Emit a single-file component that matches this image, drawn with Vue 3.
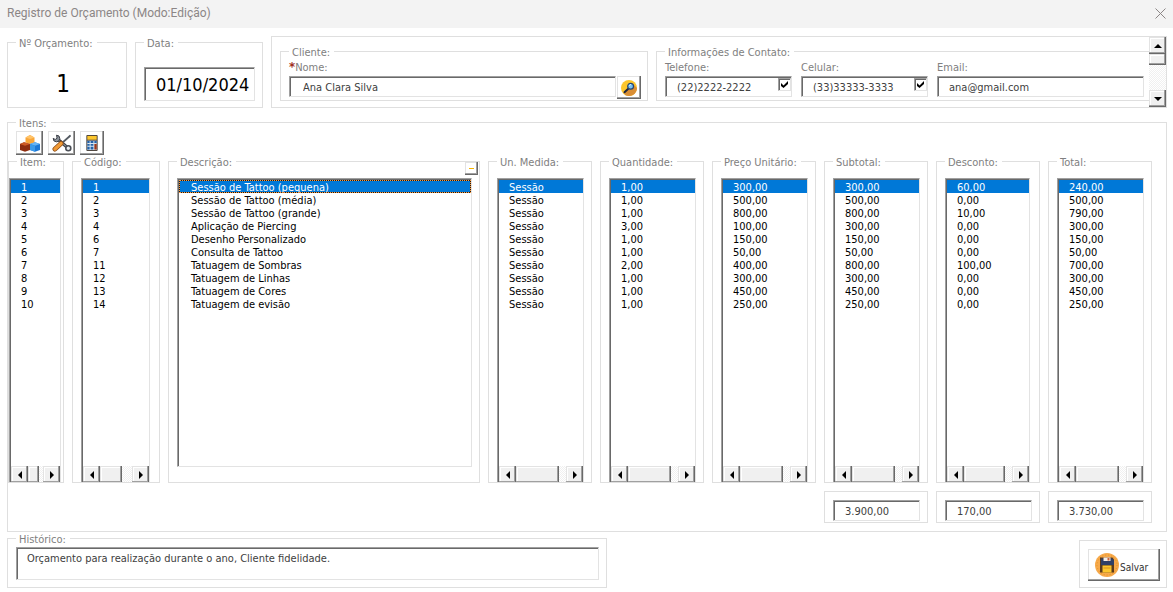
<script setup>
const items = [
  ['1', '1', 'Sessão de Tattoo (pequena)', 'Sessão', '1,00', '300,00', '300,00', '60,00', '240,00'],
  ['2', '2', 'Sessão de Tattoo (média)', 'Sessão', '1,00', '500,00', '500,00', '0,00', '500,00'],
  ['3', '3', 'Sessão de Tattoo (grande)', 'Sessão', '1,00', '800,00', '800,00', '10,00', '790,00'],
  ['4', '4', 'Aplicação de Piercing', 'Sessão', '3,00', '100,00', '300,00', '0,00', '300,00'],
  ['5', '6', 'Desenho Personalizado', 'Sessão', '1,00', '150,00', '150,00', '0,00', '150,00'],
  ['6', '7', 'Consulta de Tattoo', 'Sessão', '1,00', '50,00', '50,00', '0,00', '50,00'],
  ['7', '11', 'Tatuagem de Sombras', 'Sessão', '2,00', '400,00', '800,00', '100,00', '700,00'],
  ['8', '12', 'Tatuagem de Linhas', 'Sessão', '1,00', '300,00', '300,00', '0,00', '300,00'],
  ['9', '13', 'Tatuagem de Cores', 'Sessão', '1,00', '450,00', '450,00', '0,00', '450,00'],
  ['10', '14', 'Tatuagem de evisão', 'Sessão', '1,00', '250,00', '250,00', '0,00', '250,00'],
]

const columns = [
  { label: 'Item:', kind: 'item', thumb: 11 },
  { label: 'Código:', kind: 'code', thumb: 22 },
  { label: 'Descrição:', kind: 'description', thumb: 0 },
  { label: 'Un. Medida:', kind: '', thumb: 43 },
  { label: 'Quantidade:', kind: '', thumb: 43 },
  { label: 'Preço Unitário:', kind: '', thumb: 43 },
  { label: 'Subtotal:', kind: '', thumb: 43 },
  { label: 'Desconto:', kind: 'discount', thumb: 41 },
  { label: 'Total:', kind: '', thumb: 43 },
]

const totals = [
  { label: 'Subtotal', value: '3.900,00' },
  { label: 'Desconto', value: '170,00' },
  { label: 'Total', value: '3.730,00' },
]
</script>

<template>
  <main class="window">
    <header class="titlebar">
      <span>Registro de Orçamento (Modo:Edição)</span>
      <button class="close" type="button" aria-label="Fechar">
        <svg width="11" height="11" viewBox="0 0 11 11"><path d="M.5 .5l10 10M10.5 .5l-10 10" fill="none" stroke="#8c8686" stroke-width="1" /></svg>
      </button>
    </header>

    <div class="body">
      <section class="top">
        <fieldset class="frame number">
          <legend>Nº Orçamento:</legend>
          <output>1</output>
        </fieldset>
        <fieldset class="frame date">
          <legend>Data:</legend>
          <input class="sunken" type="text" value="01/10/2024" aria-label="Data" />
        </fieldset>

        <div class="panel">
          <div class="panel-content">
            <fieldset class="frame client">
              <legend>Cliente:</legend>
              <label for="nome"><b>*</b>Nome:</label>
              <div class="client-row">
                <input id="nome" class="sunken" type="text" value="Ana Clara Silva" />
                <button class="raised search" type="button" aria-label="Pesquisar cliente">
                  <svg width="16" height="16" viewBox="0 0 16 16">
                    <circle cx="8" cy="8" r="8" fill="#fcc62d" />
                    <path d="M3.5 13.5L12 4l4 4a8 8 0 0 1-12 6.900z" fill="#d98e35" />
                    <path d="M3.500 12.300L7.500 8.500" stroke="#1b2340" stroke-width="2" stroke-linecap="round" />
                    <circle cx="9.600" cy="6.200" r="2.900" fill="#79c3f5" stroke="#26466f" stroke-width="1.200" />
                    <path d="M8.200 5.800q.5-1.300 1.800-1.300" fill="none" stroke="#d8f1ff" stroke-width="1" />
                  </svg>
                </button>
              </div>
            </fieldset>

            <fieldset class="frame contact">
              <legend>Informações de Contato:</legend>
              <div class="field">
                <label for="tel">Telefone:</label>
                <input id="tel" class="sunken" type="text" value="(22)2222-2222" />
                <input class="check" type="checkbox" checked aria-label="Telefone ativo" />
              </div>
              <div class="field">
                <label for="cel">Celular:</label>
                <input id="cel" class="sunken" type="text" value="(33)33333-3333" />
                <input class="check" type="checkbox" checked aria-label="Celular ativo" />
              </div>
              <div class="field">
                <label for="email">Email:</label>
                <input id="email" class="sunken" type="text" value="ana@gmail.com" />
              </div>
            </fieldset>
          </div>
          <div class="vbar">
            <button class="bar-part" type="button" aria-label="Rolar para cima">
              <svg width="8" height="4" viewBox="0 0 8 4"><path d="M4 0l4 4H0z" /></svg>
            </button>
            <span class="bar-part thumb"></span>
            <span class="track"></span>
            <button class="bar-part" type="button" aria-label="Rolar para baixo">
              <svg width="8" height="4" viewBox="0 0 8 4"><path d="M0 0h8L4 4z" /></svg>
            </button>
          </div>
        </div>
      </section>

      <fieldset class="frame items">
        <legend>Itens:</legend>
        <div class="tools">
          <button class="raised" type="button" aria-label="Produtos">
            <svg width="20" height="17" viewBox="0 0 20 17">
              <path d="M5.500 2.500L10 0l4.500 2.500v5L10 9 5.500 7.500z" fill="#f9a63a" />
              <path d="M5.500 2.500L10 0l4.500 2.500L10 4z" fill="#ffc46a" />
              <path d="M0 9l4-1.800L10 9v6l-5 1.800L0 15z" fill="#8e2d10" />
              <path d="M0 9l4-1.800L10 9l-5 1.800z" fill="#cf5a24" />
              <path d="M10 9l5-1.800L20 9v6l-5 1.800L10 15z" fill="#1d78d6" />
              <path d="M10 9l5-1.800L20 9l-5 1.800z" fill="#69b5f3" />
              <path d="M10 9l5 1.800v6L10 15z" fill="#3d9bea" />
            </svg>
          </button>
          <button class="raised" type="button" aria-label="Serviços">
            <svg width="20" height="18" viewBox="0 0 20 18">
              <path d="M5 4.500L16 14" stroke="#3c3f47" stroke-width="3" />
              <path d="M5 4.500L16 14" stroke="#a9b0b8" stroke-width="1" />
              <path d="M4.500 1.200A3.300 3.300 0 1 1 1.200 4.300l2 1.200 1.900-1.300z" fill="#8d949c" stroke="#3c3f47" stroke-width="1" />
              <circle cx="16.300" cy="14.300" r="2.500" fill="#e9edf0" stroke="#4b4f57" stroke-width="1.600" />
              <path d="M18.500 1.500L10 9" stroke="#555b63" stroke-width="1.700" />
              <path d="M18.800 .8l-2.500 1.500 1.200 1.200z" fill="#555b63" />
              <path d="M3 15l6-5.500" stroke="#8b4b16" stroke-width="5" stroke-linecap="round" />
              <path d="M3 15l6-5.500" stroke="#f09a36" stroke-width="3.400" stroke-linecap="round" />
            </svg>
          </button>
          <button class="raised calc" type="button" aria-label="Calcular">
            <svg width="12" height="16" viewBox="0 0 12 17">
              <rect width="12" height="17" rx="1" fill="#4a4038" />
              <rect x="1" y="1" width="10" height="4" fill="#fcc62d" />
              <path d="M1 6h10v10H1z" fill="#d6e5f2" />
              <path d="M1 6.500h2.500v2H1zM4.500 6.500h3v2h-3zM8.500 6.500H11v2H8.500zM1 9.500h2.500v2H1zM4.500 9.500h3v2h-3zM1 12.500h2.500v3H1zM4.500 12.500h3v3h-3z" fill="#2361a8" />
              <path d="M8.500 9.500H11v6H8.500z" fill="#9b3418" />
            </svg>
          </button>
        </div>

        <div class="columns">
          <fieldset v-for="(col, c) in columns" :key="col.label" class="frame column" :class="col.kind">
            <legend>{{ col.label }}</legend>
            <button v-if="col.kind === 'description'" class="raised collapse" type="button" aria-label="Recolher"><i></i></button>
            <div class="sunken list">
              <ul role="listbox" :aria-label="col.label">
                <li
                  v-for="(row, r) in items"
                  :key="row[0]"
                  role="option"
                  :aria-selected="r === 0"
                  :class="{ selected: r === 0 }"
                >{{ row[c] }}</li>
              </ul>
              <div v-if="col.thumb" class="hbar">
                <button class="bar-part" type="button" aria-label="Rolar à esquerda">
                  <svg width="4" height="8" viewBox="0 0 4 8"><path d="M4 0v8L0 4z" /></svg>
                </button>
                <span class="bar-part thumb" :style="{ width: col.thumb + 'px' }"></span>
                <span class="track"></span>
                <button class="bar-part" type="button" aria-label="Rolar à direita">
                  <svg width="4" height="8" viewBox="0 0 4 8"><path d="M0 0l4 4-4 4z" /></svg>
                </button>
              </div>
            </div>
          </fieldset>
        </div>

        <div class="totals">
          <div v-for="t in totals" :key="t.label" class="frame total">
            <input class="sunken" type="text" :value="t.value" :aria-label="t.label" />
          </div>
        </div>
      </fieldset>

      <footer class="bottom">
        <fieldset class="frame history">
          <legend>Histórico:</legend>
          <textarea class="sunken" aria-label="Histórico">Orçamento para realização durante o ano, Cliente fidelidade.</textarea>
        </fieldset>
        <div class="frame save">
          <button class="raised" type="button">
            <svg width="24" height="24" viewBox="0 0 24 24">
              <circle cx="12" cy="12" r="12" fill="#f6a94b" />
              <circle cx="12" cy="12" r="10" fill="none" stroke="#e8921f" stroke-width="1" stroke-dasharray="1 2" />
              <path d="M5 4.500h12.500L19 6.500v13H5z" fill="#5a3a1c" />
              <path d="M6 5.500h11.500l1.500 2V12H6z" fill="#2f3f66" />
              <path d="M8.500 4.500h7v3.500h-7z" fill="#f4eee8" />
              <path d="M12.500 5h2v2.500h-2z" fill="#c9623a" />
              <path d="M7.500 12.500h9v7h-9z" fill="#fcc62d" />
              <path d="M8.500 15h7" stroke="#d98e20" stroke-width="1" />
            </svg>
            <span>Salvar</span>
          </button>
        </div>
      </footer>
    </div>
  </main>
</template>

<style>
body {
  margin: 0;
  background: #fff;
}
</style>

<style scoped>
* {
  box-sizing: border-box;
}

.window {
  min-height: 100vh;
  display: flex;
  flex-direction: column;
  background: #fff;
  color: #808080;
  font: 11px/13px "DejaVu Sans Condensed", "DejaVu Sans", sans-serif;
}

.titlebar {
  height: 28px;
  padding: 0 7px 2px 7px;
  display: flex;
  align-items: center;
  justify-content: space-between;
  background: #f3f3f3;
  color: #8c8686;
  font: 12px/16px Roboto, sans-serif;
}

button,
input,
textarea {
  font: inherit;
  margin: 0;
  padding: 0;
  border: 0;
  border-radius: 0;
  outline: 0;
}

svg {
  display: block;
  flex: none;
}

.close {
  background: none;
}

.body {
  flex: 1;
  display: flex;
  flex-direction: column;
  padding: 8px 6px 4px 7px;
}

.frame {
  min-width: 0;
  margin: 0;
  padding: 0;
  border: 1px solid #dfdfdf;
}

legend {
  padding: 0 4px 0 3px;
  height: 13px;
  line-height: 15px;
  white-space: nowrap;
}

.number > legend,
.items > legend,
.item > legend {
  margin-left: 8px;
}

.sunken {
  border: 1px solid;
  border-color: #a0a0a0 #e3e3e3 #e3e3e3 #a0a0a0;
  box-shadow: inset 1px 1px 0 #696969;
  background: #fff;
  color: #404040;
}

input.sunken {
  width: 100%;
  height: 21px;
  padding: 1px 0 0 11px;
}

.raised {
  display: flex;
  align-items: center;
  justify-content: center;
  background: #fff;
  color: #333;
  box-shadow:
    inset -1px -1px 0 #696969,
    inset -2px -2px 0 #a0a0a0,
    inset 1px 1px 0 #e3e3e3;
}

.top {
  display: flex;
  gap: 8px;
  height: 72px;
  margin-bottom: 8px;
}

.number {
  width: 120px;
}

.number output {
  display: block;
  padding: 20px 8px 0 0;
  color: #000;
  font-size: 24px;
  line-height: 30px;
  text-align: center;
}

.date {
  width: 128px;
  padding: 18px 7px 0 8px;
}

.date input.sunken {
  height: 34px;
  padding: 0 0 0 11px;
  color: #000;
  font-size: 18px;
}

.panel {
  flex: 1;
  min-width: 0;
  display: flex;
  border: 1px solid #dfdfdf;
}

.panel-content {
  flex: 1;
  min-width: 0;
  display: grid;
  grid-template-columns: 368fr 493fr;
  gap: 8px;
  padding: 8px 0 6px 8px;
}

label {
  display: block;
  height: 13px;
  margin-bottom: 2px;
}

.client {
  padding: 3px 6px 0 8px;
}

.client b {
  color: #a03020;
  font-size: 13px;
  line-height: 1px;
}

.client-row {
  display: flex;
  gap: 1px;
}

.client-row input.sunken {
  flex: 1;
  min-width: 0;
  padding-left: 13px;
}

.search {
  width: 24px;
  height: 23px;
}

.contact {
  display: grid;
  grid-template-columns: 127px 127px 1fr;
  gap: 9px;
  padding: 3px 5px 0 8px;
  border-right: 0;
}

.field {
  position: relative;
}

.check {
  appearance: none;
  position: absolute;
  right: 1px;
  top: 17px;
  width: 13px;
  height: 13px;
  border: 1px solid;
  border-color: #a0a0a0 #e3e3e3 #e3e3e3 #a0a0a0;
  box-shadow: inset 1px 1px 0 #696969;
  background: #fff;
}

.check:checked::before {
  content: "";
  display: block;
  width: 7px;
  height: 7px;
  margin: 2px;
  background: #000;
  clip-path: polygon(0 29%, 36% 64%, 100% 0, 100% 43%, 36% 100%, 0 71%);
}

.vbar {
  width: 17px;
  display: flex;
  flex-direction: column;
}

.bar-part {
  flex: none;
  width: 17px;
  height: 17px;
  display: flex;
  align-items: center;
  justify-content: center;
  background: #f0f0f0;
  box-shadow:
    inset -1px -1px 0 #696969,
    inset -2px -2px 0 #a0a0a0,
    inset 1px 1px 0 #e3e3e3,
    inset 2px 2px 0 #fff;
}

.vbar .thumb {
  height: 11px;
}

.track {
  flex: 1;
  background: repeating-conic-gradient(#f0f0f0 0 25%, #fff 0 50%) 0 0 / 2px 2px;
}

.items {
  flex: 1;
  padding: 2px 14px 8px 0;
}

.tools {
  display: flex;
  gap: 5px;
  padding-left: 8px;
}

.tools .raised {
  width: 27px;
  height: 24px;
}

.tools .calc {
  width: 24px;
}

.columns {
  min-height: 328px;
  display: grid;
  grid-template-columns: 56px 88px 1fr repeat(6, 104px);
  gap: 8px;
}

.column {
  position: relative;
  display: flex;
  padding: 10px 7px 0 8px;
}

.item {
  padding: 10px 2px 0 0;
}

.code {
  padding-right: 9px;
}

.discount {
  padding-right: 9px;
}

.description {
  padding-bottom: 15px;
}

.list {
  flex: 1;
  min-width: 0;
  display: flex;
  flex-direction: column;
  border-bottom: 0;
  color: #000;
}

.description .list {
  border-bottom: 1px solid #e3e3e3;
}

.list ul {
  flex: 1;
  margin: 0;
  padding: 1px 0 0 1px;
  list-style: none;
}

.list li {
  height: 13px;
  padding-left: 10px;
  line-height: 15px;
  white-space: nowrap;
}

.description li {
  padding-left: 12px;
}

.list .selected {
  background: #0078d7;
  color: #fff;
}

.description .selected {
  outline: 1px dotted #ff9a38;
  outline-offset: -1px;
  box-shadow: inset 0 0 0 1px #1a1a1a;
}

.collapse {
  position: absolute;
  top: -6px;
  right: 1px;
  width: 13px;
  height: 13px;
}

.collapse i {
  width: 5px;
  height: 1px;
  background: #f5b400;
}

.hbar {
  display: flex;
  height: 16px;
  margin-left: 1px;
  overflow: hidden;
}

.totals {
  display: grid;
  grid-template-columns: repeat(3, 104px);
  justify-content: end;
  gap: 8px;
  margin-top: 8px;
}

.total {
  height: 32px;
  padding: 8px 7px 0 8px;
}

.bottom {
  display: flex;
  justify-content: space-between;
  align-items: flex-end;
}

.history {
  width: 600px;
  height: 56px;
  padding: 2px 7px 0 8px;
}

.history textarea {
  display: block;
  width: 100%;
  height: 33px;
  padding: 4px 10px;
  resize: none;
  overflow: hidden;
}

.save {
  width: 88px;
  height: 48px;
  padding: 8px 6px 6px 8px;
}

.save .raised {
  width: 100%;
  height: 32px;
  justify-content: flex-start;
  gap: 1px;
  padding-left: 7px;
}

.save span {
  padding-top: 4px;
  font-size: 10px;
}
</style>
